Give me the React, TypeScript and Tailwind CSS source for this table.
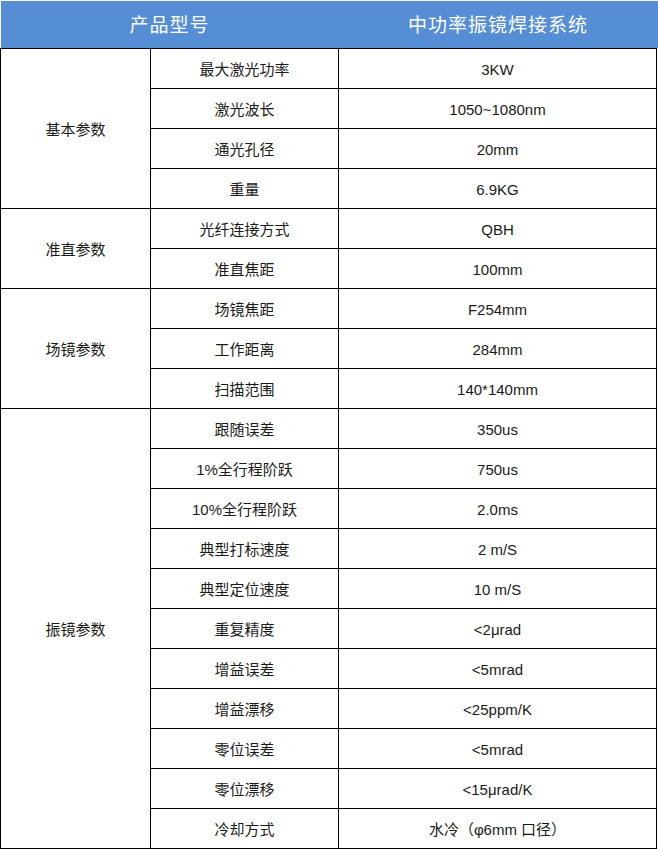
import React from "react";

type Group = { name: string; rows: [string, string][] };

const groups: Group[] = [
  {
    name: "基本参数",
    rows: [
      ["最大激光功率", "3KW"],
      ["激光波长", "1050~1080nm"],
      ["通光孔径", "20mm"],
      ["重量", "6.9KG"],
    ],
  },
  {
    name: "准直参数",
    rows: [
      ["光纤连接方式", "QBH"],
      ["准直焦距", "100mm"],
    ],
  },
  {
    name: "场镜参数",
    rows: [
      ["场镜焦距", "F254mm"],
      ["工作距离", "284mm"],
      ["扫描范围", "140*140mm"],
    ],
  },
  {
    name: "振镜参数",
    rows: [
      ["跟随误差", "350us"],
      ["1%全行程阶跃", "750us"],
      ["10%全行程阶跃", "2.0ms"],
      ["典型打标速度", "2 m/S"],
      ["典型定位速度", "10 m/S"],
      ["重复精度", "<2μrad"],
      ["增益误差", "<5mrad"],
      ["增益漂移", "<25ppm/K"],
      ["零位误差", "<5mrad"],
      ["零位漂移", "<15μrad/K"],
      ["冷却方式", "水冷（φ6mm 口径）"],
    ],
  },
];

const spanClass: Record<number, string> = {
  2: "row-span-2",
  3: "row-span-3",
  4: "row-span-4",
  11: "row-span-11",
};

export default function App() {
  return (
    <div
      className="w-[658px] h-[849px] bg-white text-[#1a1a1a]"
      style={{ fontFamily: '"Liberation Sans", "Noto Sans CJK SC", sans-serif' }}
    >
      <div className="pt-px pl-px">
        <div className="flex h-[47px] bg-[#558ed5] text-white text-[19px] tracking-[1px] pt-[4px]">
          <div className="w-[337px] flex items-center justify-center">产品型号</div>
          <div className="flex-1 flex items-center justify-center">中功率振镜焊接系统</div>
        </div>
      </div>
      <div className="grid grid-cols-[150px_188px_318px] auto-rows-[40px] border-l border-t border-black w-[657px] text-[15px]">
        {groups.map((g) => (
          <React.Fragment key={g.name}>
            <div
              className={`${spanClass[g.rows.length]} col-start-1 flex items-center justify-center border-r border-b border-black pt-[4px]`}
            >
              {g.name}
            </div>
            {g.rows.map(([k, v]) => (
              <React.Fragment key={k}>
                <div className="col-start-2 flex items-center justify-center border-r border-b border-black pt-[4px]">
                  {k}
                </div>
                <div className="col-start-3 flex items-center justify-center border-r border-b border-black pt-[4px]">
                  {v}
                </div>
              </React.Fragment>
            ))}
          </React.Fragment>
        ))}
      </div>
    </div>
  );
}
